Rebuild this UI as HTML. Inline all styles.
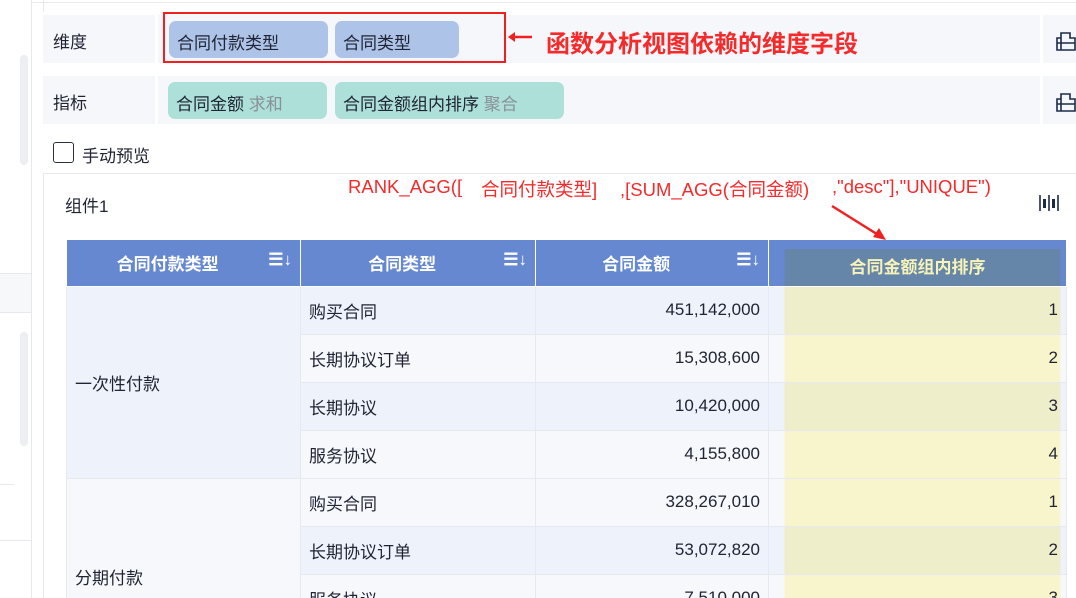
<!DOCTYPE html>
<html><head><meta charset="utf-8"><style>
*{margin:0;padding:0;box-sizing:border-box}
html,body{width:1076px;height:598px;overflow:hidden}
body{background:#fff;font-family:"Liberation Sans","Noto Sans CJK SC",sans-serif;color:#1f2333;position:relative;font-size:16px}
.a{position:absolute}
.row{position:absolute;left:43px;width:1033px;height:48px;background:#f6f7fb}
.lbl{position:absolute;left:10px;top:13px;font-size:17px}
.sep{position:absolute;top:0;width:3px;height:48px;background:#fff}
.chip{position:absolute;height:37px;border-radius:7px;font-size:17px;padding:8px 0 0 8px;white-space:nowrap}
.b{background:#aec3e8}.t{background:#ace0d8}
.g{color:#8a9097}
table{position:absolute;left:66px;top:240px;border-collapse:collapse;table-layout:fixed}
td,th{height:48px;border:1px solid #e6e9f0;font-size:17px;font-weight:normal}
th{background:#6688d0;color:#fff;font-weight:bold;border:1px solid #fff;border-top:none;height:46px}
td{padding:0 8px}
.o{background:#eef2fa}.e{background:#f7f8fc}
.o .y{background:linear-gradient(90deg,#eef2fa 15px,#eeeecb 15px,#eeeecb 291px,#eef2fa 291px)}
.e .y{background:linear-gradient(90deg,#f7f8fc 15px,#f8f5cc 15px,#f8f5cc 291px,#f7f8fc 291px)}
.r{text-align:right}
.f{position:absolute;top:176px;font-size:18.5px;color:#f52a2a;white-space:nowrap}
</style></head><body>
<div class="a" style="left:31px;top:0;width:1px;height:598px;background:#e6e8ee"></div>
<div class="a" style="left:43px;top:0;width:1px;height:12px;background:#e6e8ee"></div>
<div class="a" style="left:32px;top:2px;width:1044px;height:1px;background:#e8e9ee"></div>
<div class="a" style="left:20px;top:55px;width:8px;height:110px;border-radius:4px;background:#eceef2"></div>
<div class="a" style="left:20px;top:332px;width:8px;height:114px;border-radius:4px;background:#eceef2"></div>
<div class="a" style="left:0;top:273px;width:31px;height:40px;background:#f7f8fa;border-top:1px solid #e6e8ee;border-bottom:1px solid #e6e8ee"></div>
<div class="a" style="left:0;top:484px;width:14px;height:1px;background:#e6e8ee"></div>
<div class="a" style="left:0;top:540px;width:31px;height:1px;background:#e6e8ee"></div>

<div class="row" style="top:15px"><div class="lbl">维度</div><div class="sep" style="left:112px"></div><div class="sep" style="left:997px"></div></div>
<div class="row" style="top:76px"><div class="lbl">指标</div><div class="sep" style="left:112px"></div><div class="sep" style="left:997px"></div></div>
<svg class="a" style="left:1055px;top:30px" width="21" height="22"><path d="M6 3h9v5h5v12H2V8h4z M6 8v12 M2 13h18" fill="none" stroke="#1c2a4a" stroke-width="1.6"/></svg>
<svg class="a" style="left:1055px;top:91px" width="21" height="22"><path d="M6 3h9v5h5v12H2V8h4z M6 8v12 M2 13h18" fill="none" stroke="#1c2a4a" stroke-width="1.6"/></svg>

<div class="chip b" style="left:169px;top:21px;width:159px">合同付款类型</div>
<div class="chip b" style="left:335px;top:21px;width:124px">合同类型</div>
<div class="chip t" style="left:168px;top:82px;width:159px">合同金额 <span class="g">求和</span></div>
<div class="chip t" style="left:335px;top:82px;width:229px">合同金额组内排序 <span class="g">聚合</span></div>
<div class="a" style="left:163px;top:12px;width:343px;height:51px;border:2px solid #f02020"></div>
<svg class="a" style="left:508px;top:31px" width="24" height="12"><path d="M24 6H4" stroke="#f02020" stroke-width="2.5"/><path d="M0 6l7-5v10z" fill="#f02020"/></svg>
<div class="a" style="left:546px;top:24px;font-size:24px;font-weight:bold;color:#f52a2a;white-space:nowrap">函数分析视图依赖的维度字段</div>

<div class="a" style="left:53px;top:142px;width:21px;height:21px;border:1.5px solid #2a3040;border-radius:3px"></div>
<div class="a" style="left:82px;top:142px;font-size:17px">手动预览</div>

<div class="a" style="left:43px;top:173px;width:1033px;height:425px;border-left:1px solid #e6e8ee;border-top:1px solid #e6e8ee"></div>
<div class="a" style="left:65px;top:192px;font-size:17px">组件1</div>
<div class="f" style="left:348px">RANK_AGG([</div>
<div class="f" style="left:481px">合同付款类型]</div>
<div class="f" style="left:620px">,[SUM_AGG(合同金额)</div>
<div class="f" style="left:832px">,"desc"],"UNIQUE")</div>
<svg class="a" style="left:1038px;top:193px" width="22" height="20"><path d="M2 2v16M20 2v16M11 2v16" stroke="#1c2a4a" stroke-width="1.6"/><rect x="5" y="6" width="3" height="9" fill="#1c2a4a"/><rect x="14" y="6" width="3" height="9" fill="#1c2a4a"/></svg>
<svg class="a" style="left:830px;top:204px" width="60" height="40"><path d="M2 2L50 32" stroke="#f02020" stroke-width="2.5"/><path d="M56 36L43 33l6-9z" fill="#f02020"/></svg>

<table>
<colgroup><col style="width:234px"><col style="width:235px"><col style="width:233px"><col style="width:298px"></colgroup>
<tr><th>合同付款类型 <span style="float:right;margin-right:8px">☰↓</span></th><th>合同类型 <span style="float:right;margin-right:8px">☰↓</span></th><th>合同金额 <span style="float:right;margin-right:8px">☰↓</span></th><th style="background:linear-gradient(180deg,#6688d0 9px,transparent 9px),linear-gradient(90deg,#6688d0 15px,#6586a8 15px,#6586a8 291px,#6688d0 291px);color:#f6f2b8;padding-top:6px">合同金额组内排序</th></tr>
<tr class="o"><td rowspan="4" class="o">一次性付款</td><td>购买合同</td><td class="r">451,142,000</td><td class="r y">1</td></tr>
<tr class="e"><td>长期协议订单</td><td class="r">15,308,600</td><td class="r y">2</td></tr>
<tr class="o"><td>长期协议</td><td class="r">10,420,000</td><td class="r y">3</td></tr>
<tr class="e"><td>服务协议</td><td class="r">4,155,800</td><td class="r y">4</td></tr>
<tr class="e"><td rowspan="3" class="e" style="vertical-align:top;padding-top:85px">分期付款</td><td>购买合同</td><td class="r">328,267,010</td><td class="r y">1</td></tr>
<tr class="o"><td>长期协议订单</td><td class="r">53,072,820</td><td class="r y">2</td></tr>
<tr class="e"><td>服务协议</td><td class="r">7,510,000</td><td class="r y">3</td></tr>
</table>
</body></html>
